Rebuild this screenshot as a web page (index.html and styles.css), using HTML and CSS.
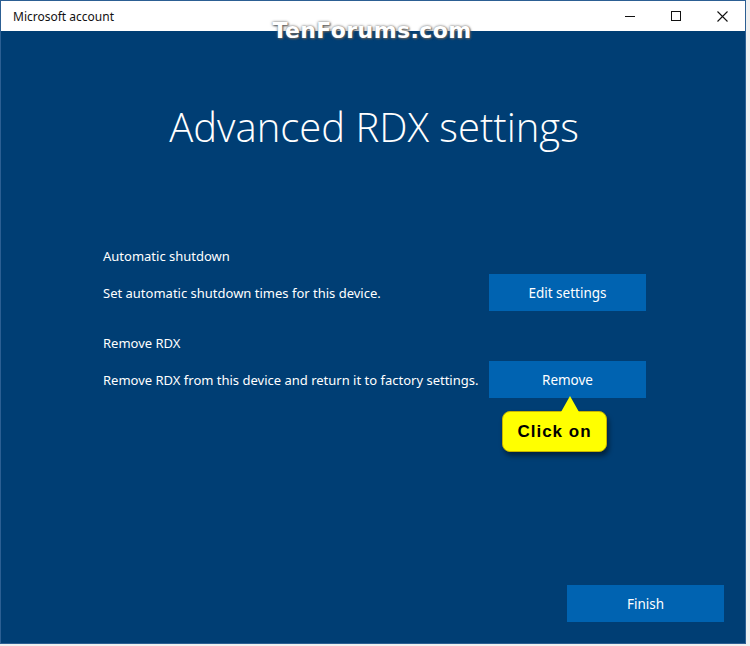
FILE: index.html
```html
<!DOCTYPE html>
<html>
<head>
<meta charset="utf-8">
<link rel="stylesheet" href="styles.css">
</head>
<body>
<div class="window">
  <div class="titlebar">
    <span class="title">Microsoft account</span>
    <div class="controls">
      <span class="ctl"><svg width="10" height="10" viewBox="0 0 10 10"><path d="M0 5.5H10" stroke="#111" stroke-width="1"/></svg></span>
      <span class="ctl"><svg width="10" height="10" viewBox="0 0 10 10"><rect x="0.5" y="0.5" width="9" height="9" fill="none" stroke="#111" stroke-width="1"/></svg></span>
      <span class="ctl"><svg width="11" height="11" viewBox="0 0 11 11"><path d="M0.5 0.5L10.5 10.5M10.5 0.5L0.5 10.5" stroke="#111" stroke-width="1.1"/></svg></span>
    </div>
  </div>
  <div class="watermark">TenForums.com</div>
  <div class="content">
    <h1 class="heading">Advanced RDX settings</h1>
    <div class="settings">
      <div class="label">Automatic shutdown</div>
      <div class="row">
        <span class="desc">Set automatic shutdown times for this device.</span>
        <button class="btn">Edit settings</button>
      </div>
      <div class="label">Remove RDX</div>
      <div class="row">
        <span class="desc">Remove RDX from this device and return it to factory settings.</span>
        <div class="btn-wrap">
          <button class="btn">Remove</button>
          <div class="callout">Click on</div>
        </div>
      </div>
    </div>
    <div class="footer">
      <button class="btn">Finish</button>
    </div>
  </div>
</div>
</body>
</html>
```

FILE: styles.css
```css
html, body {
  margin: 0;
  padding: 0;
  background: #f0f0f0;
}
body {
  width: 750px;
  height: 646px;
  overflow: hidden;
  font-family: "Noto Sans", "Open Sans", sans-serif;
}
.window {
  position: relative;
  width: 744px;
  height: 642px;
  border: 1px solid #2c5f93;
  background: #003e74;
  display: flex;
  flex-direction: column;
}
.titlebar {
  height: 30px;
  background: #ffffff;
  display: flex;
  align-items: center;
  justify-content: space-between;
  flex-shrink: 0;
}
.title {
  font-size: 12px;
  color: #111;
  padding-left: 12px;
}
.controls {
  display: flex;
  height: 100%;
}
.ctl {
  width: 46px;
  display: flex;
  align-items: center;
  justify-content: center;
}
.watermark {
  position: absolute;
  left: 0;
  right: 0;
  top: 17px;
  text-align: center;
  font-family: "DejaVu Sans", sans-serif;
  font-weight: bold;
  font-size: 22px;
  letter-spacing: 0.4px;
  color: #ffffff;
  text-shadow: 0 0 3px #6a6a6a, 1px 1px 2px #555;
  padding-right: 2px;
}
.content {
  flex: 1;
  display: flex;
  flex-direction: column;
  color: #ffffff;
}
.heading {
  margin: 70px 0 0;
  text-align: center;
  font-family: "Open Sans", sans-serif;
  font-weight: 300;
  font-size: 40px;
  line-height: 52px;
  padding-left: 2px;
}
.settings {
  margin: 93px 0 0 102px;
  width: 543px;
  display: flex;
  flex-direction: column;
}
.label {
  font-size: 13px;
  line-height: 20px;
  margin-bottom: 8px;
}
.row {
  display: flex;
  justify-content: space-between;
  align-items: center;
  font-size: 13px;
  white-space: nowrap;
  margin-bottom: 22px;
}
.btn {
  width: 157px;
  height: 37px;
  border: none;
  background: #0063b1;
  color: #ffffff;
  font-family: "Noto Sans", "Open Sans", sans-serif;
  font-size: 13.5px;
  padding: 0;
}
.btn-wrap {
  position: relative;
}
.callout {
  position: absolute;
  left: 13px;
  top: 50px;
  width: 105px;
  height: 41px;
  background: #ffff00;
  border: 1px solid #c8b400;
  border-radius: 8px;
  box-sizing: border-box;
  display: flex;
  align-items: center;
  justify-content: center;
  font-family: "Liberation Sans", Arial, sans-serif;
  font-weight: bold;
  font-size: 17px;
  letter-spacing: 1px;
  color: #000;
  box-shadow: 2px 4px 5px rgba(0, 0, 0, 0.45);
}
.callout::before {
  content: "";
  position: absolute;
  left: 58px;
  top: -16px;
  border-left: 9px solid transparent;
  border-right: 9px solid transparent;
  border-bottom: 16px solid #ffff00;
}
.footer {
  margin-top: auto;
  display: flex;
  justify-content: flex-end;
  padding: 0 21px 21px 0;
}
```
